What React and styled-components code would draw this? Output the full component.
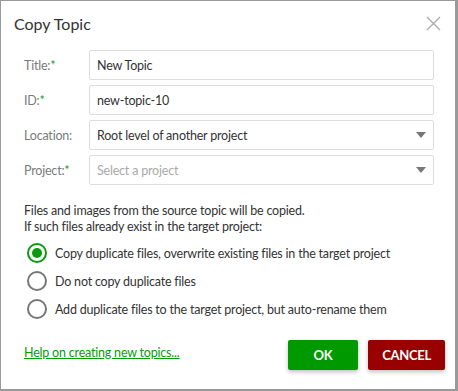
import React from "react";
import styled, { createGlobalStyle } from "styled-components";

const GlobalStyle = createGlobalStyle`
  html, body {
    margin: 0;
    padding: 0;
    background: #9a9a9a;
    font-family: "Lato", "Liberation Sans", sans-serif;
  }
`;

const Dialog = styled.div`
  box-sizing: border-box;
  width: 454px;
  height: 388px;
  margin: 1px 0 0 1px;
  background: #fff;
  display: flex;
  flex-direction: column;
  color: #333;
  font-size: 12.5px;
  letter-spacing: -0.2px;
`;

const Header = styled.div`
  display: flex;
  align-items: center;
  justify-content: space-between;
  padding: 10px 14px 0 13px;
  height: 25px;
`;

const Title = styled.h1`
  margin: 0;
  font-size: 16px;
  font-weight: 400;
  letter-spacing: 0;
  color: #333;
`;

const Close = styled.button`
  border: 0;
  background: none;
  padding: 0;
  width: 15px;
  height: 15px;
  display: flex;
  cursor: pointer;
`;

const Form = styled.div`
  display: grid;
  grid-template-columns: 65px 1fr;
  row-gap: 5px;
  padding: 14px 21px 0 23px;
`;

const Label = styled.label`
  display: flex;
  align-items: center;
  color: #7a7a7a;
`;

const Req = styled.span`
  color: #1a9a3a;
`;

const Input = styled.input`
  box-sizing: border-box;
  height: 30px;
  width: 100%;
  border: 1px solid #ddd;
  border-radius: 2px;
  padding: 0 7px;
  font: inherit;
  letter-spacing: inherit;
  color: #333;
  outline: none;
`;

const Select = styled.div`
  box-sizing: border-box;
  height: 30px;
  border: 1px solid #ddd;
  border-radius: 2px;
  padding: 0 7px;
  display: flex;
  align-items: center;
  justify-content: space-between;
  color: ${(p) => (p.$placeholder ? "#aaa" : "#333")};
`;

const Caret = styled.span`
  width: 0;
  height: 0;
  border-left: 5px solid transparent;
  border-right: 5px solid transparent;
  border-top: 6px solid #777;
`;

const Note = styled.p`
  margin: 18px 0 0 23px;
  line-height: 16px;
  color: #333;
`;

const Options = styled.div`
  display: flex;
  flex-direction: column;
  gap: 8px;
  padding: 8px 0 0 26px;
`;

const Option = styled.label`
  display: flex;
  align-items: center;
  gap: 8px;
  color: #333;
  height: 20px;
`;

const Radio = styled.span`
  box-sizing: border-box;
  width: 20px;
  height: 20px;
  border-radius: 50%;
  border: 2px solid ${(p) => (p.$checked ? "#0a9a0a" : "#777")};
  display: flex;
  align-items: center;
  justify-content: center;

  &::after {
    content: "";
    width: 10px;
    height: 10px;
    border-radius: 50%;
    background: ${(p) => (p.$checked ? "#0a9a0a" : "transparent")};
  }
`;

const Footer = styled.div`
  margin-top: auto;
  display: flex;
  align-items: center;
  justify-content: space-between;
  padding: 0 10px 19px 23px;
`;

const HelpLink = styled.a`
  color: #0a9a0a;
  text-decoration: underline;
  margin-top: -5px;
`;

const Buttons = styled.div`
  display: flex;
  gap: 10px;
`;

const Button = styled.button`
  height: 30px;
  min-width: ${(p) => p.$width}px;
  border: 0;
  border-radius: 2px;
  background: ${(p) => p.$bg};
  color: #fff;
  font-family: inherit;
  font-size: 13px;
  font-weight: 700;
  letter-spacing: -0.3px;
  box-shadow: 0 2px 4px rgba(0, 0, 0, 0.25);
  cursor: pointer;
`;

const options = [
  { label: "Copy duplicate files, overwrite existing files in the target project", checked: true },
  { label: "Do not copy duplicate files" },
  { label: "Add duplicate files to the target project, but auto-rename them" },
];

export default function App() {
  return (
    <>
      <GlobalStyle />
      <Dialog>
        <Header>
          <Title>Copy Topic</Title>
          <Close aria-label="Close">
            <svg width="15" height="15" viewBox="0 0 15 15">
              <path d="M1 1 L14 14 M14 1 L1 14" stroke="#aaa" strokeWidth="1.3" fill="none" />
            </svg>
          </Close>
        </Header>
        <Form>
          <Label>Title:<Req>*</Req></Label>
          <Input defaultValue="New Topic" />
          <Label>ID:<Req>*</Req></Label>
          <Input defaultValue="new-topic-10" />
          <Label>Location:</Label>
          <Select>
            Root level of another project
            <Caret />
          </Select>
          <Label>Project:<Req>*</Req></Label>
          <Select $placeholder>
            Select a project
            <Caret />
          </Select>
        </Form>
        <Note>
          Files and images from the source topic will be copied.
          <br />
          If such files already exist in the target project:
        </Note>
        <Options>
          {options.map((o) => (
            <Option key={o.label}>
              <Radio $checked={o.checked} />
              {o.label}
            </Option>
          ))}
        </Options>
        <Footer>
          <HelpLink href="#">Help on creating new topics...</HelpLink>
          <Buttons>
            <Button $bg="#009900" $width={70}>OK</Button>
            <Button $bg="#990000" $width={77}>CANCEL</Button>
          </Buttons>
        </Footer>
      </Dialog>
    </>
  );
}
